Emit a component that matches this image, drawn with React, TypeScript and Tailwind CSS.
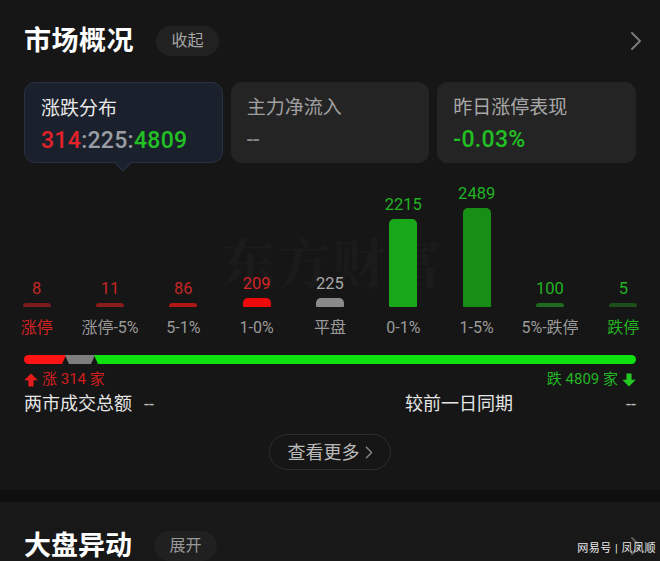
const FONT = { fontFamily: 'Roboto, "Noto Sans CJK SC", sans-serif' };

type Col = { v: string; h: number; bar: string; num: string; label: string; labelColor: string };

const cols: Col[] = [
  { v: "8", h: 4, bar: "bg-[#7a1c1c]", num: "text-[#c42626]", label: "涨停", labelColor: "text-[#d42424]" },
  { v: "11", h: 4, bar: "bg-[#8a1c1c]", num: "text-[#c42626]", label: "涨停-5%", labelColor: "text-[#9a9a9a]" },
  { v: "86", h: 4, bar: "bg-[#b01818]", num: "text-[#c42626]", label: "5-1%", labelColor: "text-[#9a9a9a]" },
  { v: "209", h: 9, bar: "bg-[#ee0a0a]", num: "text-[#d42424]", label: "1-0%", labelColor: "text-[#9a9a9a]" },
  { v: "225", h: 9, bar: "bg-[#8a8a8a]", num: "text-[#a8a8a8]", label: "平盘", labelColor: "text-[#9a9a9a]" },
  { v: "2215", h: 88, bar: "bg-[#19a819]", num: "text-[#22b322]", label: "0-1%", labelColor: "text-[#9a9a9a]" },
  { v: "2489", h: 99, bar: "bg-[#178f17]", num: "text-[#22b322]", label: "1-5%", labelColor: "text-[#9a9a9a]" },
  { v: "100", h: 4, bar: "bg-[#1e6a1e]", num: "text-[#22b322]", label: "5%-跌停", labelColor: "text-[#9a9a9a]" },
  { v: "5", h: 4, bar: "bg-[#1d4f1d]", num: "text-[#22b322]", label: "跌停", labelColor: "text-[#22b322]" },
];

function Chevron({ className = "" }: { className?: string }) {
  return (
    <svg width="12" height="20" viewBox="0 0 12 20" className={className}>
      <path d="M2 2 L10 10 L2 18" fill="none" stroke="currentColor" strokeWidth="2" strokeLinecap="round" strokeLinejoin="round" />
    </svg>
  );
}

function Arrow({ down, color }: { down?: boolean; color: string }) {
  return (
    <svg width="14" height="14" viewBox="0 0 12 12" className={down ? "rotate-180" : ""}>
      <path d="M6 0.5 L11.8 6.2 L8.2 6.2 L8.2 11.5 L3.8 11.5 L3.8 6.2 L0.2 6.2 Z" fill={color} />
    </svg>
  );
}

export default function App() {
  return (
    <div style={FONT} className="w-[660px] h-[561px] overflow-hidden bg-[#161616] text-white">
      {/* 市场概况 */}
      <div className="px-6 pt-3">
        <div className="flex items-center h-[58px]">
          <h1 className="text-[27px] font-bold tracking-[0.5px] leading-none">市场概况</h1>
          <span className="ml-[22px] h-[30px] w-[63px] rounded-full bg-[#212121] text-[#a5a5a5] text-[16px] flex items-center justify-center">
            收起
          </span>
          <Chevron className="ml-auto mr-[-6px] text-[#7a7a7a]" />
        </div>

        <div className="mt-3 grid grid-cols-3 gap-2">
          <div className="relative h-[81px] rounded-[11px] bg-[#1b212c] border border-[#283142] pl-4 pt-[13px]">
            <div className="text-[19px] leading-[26px] text-[#e8e8e8]">涨跌分布</div>
            <div className="mt-[5px] text-[23px] font-medium leading-[28px] tracking-[0.3px]">
              <span className="text-[#e3222a]">314</span>
              <span className="text-[#9a9da4]">:225:</span>
              <span className="text-[#23c023]">4809</span>
            </div>
            <div className="absolute left-1/2 -bottom-[7px] -ml-[6px] w-[12px] h-[12px] rotate-45 bg-[#1b212c] border-r border-b border-[#283142]" />
          </div>
          <div className="h-[81px] rounded-[11px] bg-[#242424] pl-4 pt-[13px]">
            <div className="text-[19px] leading-[26px] text-[#a0a0a0]">主力净流入</div>
            <div className="mt-[5px] text-[23px] leading-[28px] text-[#8a8a8a]">--</div>
          </div>
          <div className="h-[81px] rounded-[11px] bg-[#242424] pl-4 pt-[13px]">
            <div className="text-[19px] leading-[26px] text-[#a8a8a8]">昨日涨停表现</div>
            <div className="mt-[5px] text-[23px] font-medium leading-[28px] tracking-[0.3px] text-[#23c023]">-0.03%</div>
          </div>
        </div>
      </div>

      {/* chart */}
      <div className="relative mt-[9px] h-[168px]">
        <div
          className="absolute left-[222px] top-[62px] text-[54px] font-bold leading-none tracking-[1px] text-[#1b1b1b] select-none"
          style={{ fontFamily: '"Noto Serif CJK SC", "Noto Sans CJK SC", serif' }}
        >
          东方财富
        </div>
        <div className="relative grid grid-cols-9 h-full items-end pb-[2px]">
          {cols.map((c) => (
            <div key={c.label} className="flex flex-col items-center">
              <div className={`text-[16.5px] leading-[18px] ${c.num}`}>{c.v}</div>
              <div className={`mt-[5px] w-[28px] rounded-t-[5px] rounded-b-[1px] ${c.bar}`} style={{ height: c.h }} />
              <div className={`mt-[11px] text-[16px] leading-[20px] whitespace-nowrap ${c.labelColor}`}>{c.label}</div>
            </div>
          ))}
        </div>
      </div>

      {/* progress */}
      <div className="px-6 mt-[15px]">
        <div className="flex h-[9px] gap-[2px]">
          <div className="w-[42px] h-full rounded-l-full bg-[#ff1414] [clip-path:polygon(0_0,100%_0,calc(100%-4px)_100%,0_100%)]" />
          <div className="w-[30px] h-full bg-[#7e7e7e] [clip-path:polygon(0_0,100%_0,calc(100%-4px)_100%,4px_100%)] -ml-[3px]" />
          <div className="flex-1 h-full rounded-r-full bg-[#0fe00f] [clip-path:polygon(0_0,100%_0,100%_100%,4px_100%)] -ml-[3px]" />
        </div>
        <div className="mt-[7px] flex items-center justify-between text-[15px] leading-[17px]">
          <div className="flex items-center gap-[4px] text-[#d21f1f]">
            <Arrow color="#e51b1b" />
            <span>涨 314 家</span>
          </div>
          <div className="flex items-center gap-[4px] text-[#23b523]">
            <span>跌 4809 家</span>
            <Arrow down color="#23c823" />
          </div>
        </div>
        <div className="mt-[3px] flex items-center text-[18px] leading-[26px] text-[#e6e6e6]">
          <span>两市成交总额</span>
          <span className="ml-[12px] text-[#bdbdbd]">--</span>
          <span className="ml-[251px]">较前一日同期</span>
          <span className="ml-auto text-[#bdbdbd]">--</span>
        </div>
        <div className="mt-[17px] flex justify-center">
          <div className="h-[36px] w-[122px] rounded-full border border-[#2e2e2e] flex items-center justify-center gap-[5px] text-[18px] text-[#bababa]">
            <span>查看更多</span>
            <Chevron className="w-[8px] h-[13px] text-[#8a8a8a]" />
          </div>
        </div>
      </div>

      {/* divider band */}
      <div className="mt-[20px] h-[12px] bg-[#0f0f0f]" />

      {/* 大盘异动 */}
      <div className="bg-[#181818] px-6 pt-[29px] h-[80px]">
        <div className="relative flex items-center h-[30px]">
          <h2 className="text-[27px] font-bold leading-none">大盘异动</h2>
          <span className="ml-[22px] h-[30px] w-[63px] rounded-full bg-[#202020] text-[#9a9a9a] text-[16px] flex items-center justify-center">
            展开
          </span>
          <Chevron className="ml-auto mr-[-6px] text-[#5a5a5a]" />
          <div className="absolute right-[-20px] top-[10px] text-[11px] text-[#e8e8e8] tracking-[0.5px]">
            网易号 | 凤凤顺
          </div>
        </div>
      </div>
    </div>
  );
}
